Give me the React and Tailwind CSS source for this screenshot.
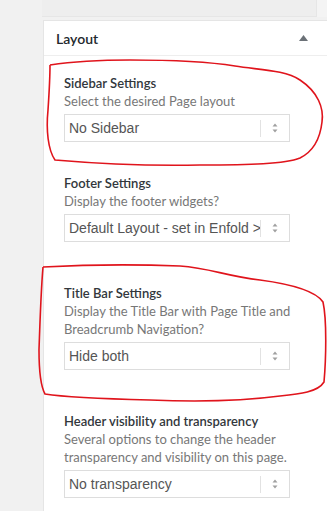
import React from "react";

const sections = [
  {
    title: "Sidebar Settings",
    desc: ["Select the desired Page layout"],
    value: "No Sidebar",
    gap: "mt-0",
  },
  {
    title: "Footer Settings",
    desc: ["Display the footer widgets?"],
    value: "Default Layout - set in Enfold > Footer",
    gap: "mt-[32px]",
  },
  {
    title: "Title Bar Settings",
    desc: ["Display the Title Bar with Page Title and", "Breadcrumb Navigation?"],
    value: "Hide both",
    gap: "mt-[42px]",
  },
  {
    title: "Header visibility and transparency",
    desc: ["Several options to change the header", "transparency and visibility on this page."],
    value: "No transparency",
    gap: "mt-[42px]",
  },
];

function Select({ value }) {
  return (
    <div className="mt-[4px] w-[226px] h-[28px] border border-[#dddddd] bg-white flex items-center">
      <div className="flex-1 overflow-hidden whitespace-nowrap pl-[4px] text-[14px] text-[#555] font-['Liberation_Sans',Arial,sans-serif]">
        {value}
      </div>
      <div className="w-px h-[17px] bg-[#e2e2e2]" />
      <div className="w-[28px] flex justify-center">
        <svg width="6" height="10" viewBox="0 0 6 10">
          <path d="M3 0.5 L5.5 3.5 L0.5 3.5 Z" fill="#a0a0a0" />
          <path d="M3 9.5 L5.5 6.5 L0.5 6.5 Z" fill="#a0a0a0" />
        </svg>
      </div>
    </div>
  );
}

export default function App() {
  return (
    <div className="relative w-[327px] h-[511px] overflow-hidden bg-[#f1f1f1] font-['Lato',sans-serif]">
      <div className="h-[20px] flex">
        <div className="w-[42px]" />
        <div className="w-[275px] h-[17px] bg-[#eeeeee] border-r border-b border-[#e6e6e6]" />
        <div className="flex-1 h-[17px] bg-[#f4f4f4]" />
      </div>

      <div className="ml-[43px] h-[491px] bg-white border-l border-t border-[#e5e5e5]">
        <div className="h-[35px] border-b border-[#eeeeee] flex items-center justify-between pl-[12px] pr-[19px]">
          <span className="text-[14px] font-semibold text-[#23282d]">Layout</span>
          <svg width="9" height="6" viewBox="0 0 9 6">
            <path d="M4.5 0 L9 6 L0 6 Z" fill="#6b7177" />
          </svg>
        </div>

        <div className="pl-[20px] pt-[18px]">
          {sections.map((s) => (
            <div key={s.title} className={s.gap}>
              <div className="text-[13px] leading-[18px] font-semibold text-[#32373c]">{s.title}</div>
              <div className="text-[13px] leading-[18px] text-[#777]">
                {s.desc.map((line) => (
                  <div key={line}>{line}</div>
                ))}
              </div>
              <Select value={s.value} />
            </div>
          ))}
        </div>
      </div>

      <svg
        className="absolute inset-0 pointer-events-none"
        width="327"
        height="511"
        viewBox="0 0 327 511"
      >
        <path
          d="M50 65 C70 62 95 60 130 60 C175 60 210 62 235 66 C260 70 285 70 300 80 C318 92 324 108 322 122 C320 140 312 152 300 158 C285 164 250 165 200 165 C150 166 90 163 55 160 C48 150 46 130 48 110 C49 95 50 80 50 65"
          fill="none"
          stroke="#e0141c"
          strokeWidth="1.6"
        />
        <path
          d="M43 267 C80 265 130 264 180 266 C210 268 225 276 260 280 C290 284 315 290 323 302 C327 320 326 360 324 382 C318 392 300 394 280 396 C250 400 200 402 150 400 C110 399 70 398 45 394 C40 385 39 370 39 350 C40 320 41 290 43 267"
          fill="none"
          stroke="#e0141c"
          strokeWidth="1.6"
        />
      </svg>
    </div>
  );
}
